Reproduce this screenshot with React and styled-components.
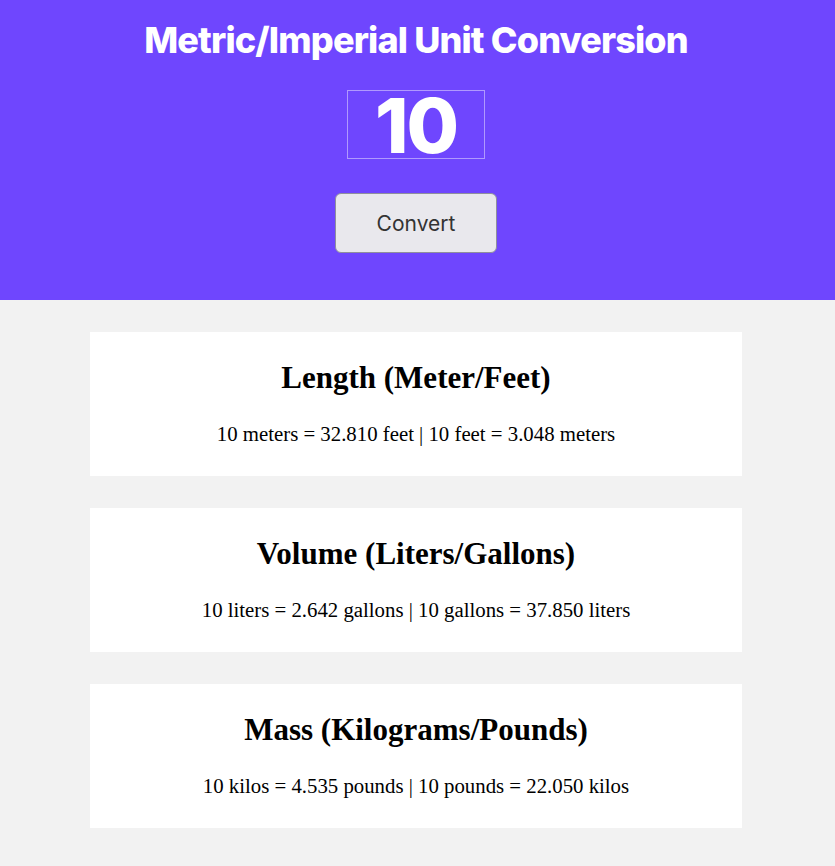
import styled, { createGlobalStyle } from "styled-components";

const GlobalStyle = createGlobalStyle`
  body {
    margin: 0;
    background-color: #f2f2f2;
    font-family: "Liberation Serif", "Times New Roman", serif;
  }
`;

const Header = styled.header`
  background-color: #6f46fe;
  height: 300px;
  display: flex;
  flex-direction: column;
  align-items: center;
  padding: 18px 3px 0 0;
  box-sizing: border-box;
  font-family: Inter, "Noto Sans", sans-serif;
`;

const Title = styled.h1`
  margin: 0;
  color: white;
  font-size: 36px;
  font-weight: 800;
  letter-spacing: -0.85px;
  line-height: 44px;
`;

const NumberInput = styled.input`
  margin-top: 28px;
  width: 138px;
  height: 69px;
  box-sizing: border-box;
  background: transparent;
  border: 1px solid rgba(255, 255, 255, 0.45);
  color: white;
  font-family: Inter, "Noto Sans", sans-serif;
  font-size: 76px;
  font-weight: 800;
  letter-spacing: -2px;
  text-align: center;
  padding: 0;
  outline: none;
`;

const ConvertButton = styled.button`
  margin-top: 34px;
  width: 162px;
  height: 60px;
  background-color: #e9e8ed;
  border: 1px solid #8f8f9d;
  border-radius: 6px;
  color: #333;
  font-family: Inter, "Noto Sans", sans-serif;
  font-size: 21px;
  cursor: pointer;
`;

const Main = styled.main`
  display: flex;
  flex-direction: column;
  align-items: center;
  gap: 32px;
  padding: 32px 3px 32px 0;
`;

const Card = styled.section`
  width: 652px;
  background-color: white;
  padding: 28px 0 30px;
  text-align: center;
`;

const CardTitle = styled.h2`
  margin: 0 0 26px;
  font-size: 31px;
  font-weight: bold;
  line-height: 36px;
`;

const Result = styled.p`
  margin: 0;
  font-size: 20.8px;
  line-height: 24px;
`;

const conversions = [
  {
    title: "Length (Meter/Feet)",
    text: "10 meters = 32.810 feet | 10 feet = 3.048 meters",
  },
  {
    title: "Volume (Liters/Gallons)",
    text: "10 liters = 2.642 gallons | 10 gallons = 37.850 liters",
  },
  {
    title: "Mass (Kilograms/Pounds)",
    text: "10 kilos = 4.535 pounds | 10 pounds = 22.050 kilos",
  },
];

export default function App() {
  return (
    <>
      <GlobalStyle />
      <Header>
        <Title>Metric/Imperial Unit Conversion</Title>
        <NumberInput type="text" inputMode="numeric" defaultValue="10" />
        <ConvertButton>Convert</ConvertButton>
      </Header>
      <Main>
        {conversions.map((c) => (
          <Card key={c.title}>
            <CardTitle>{c.title}</CardTitle>
            <Result>{c.text}</Result>
          </Card>
        ))}
      </Main>
    </>
  );
}
